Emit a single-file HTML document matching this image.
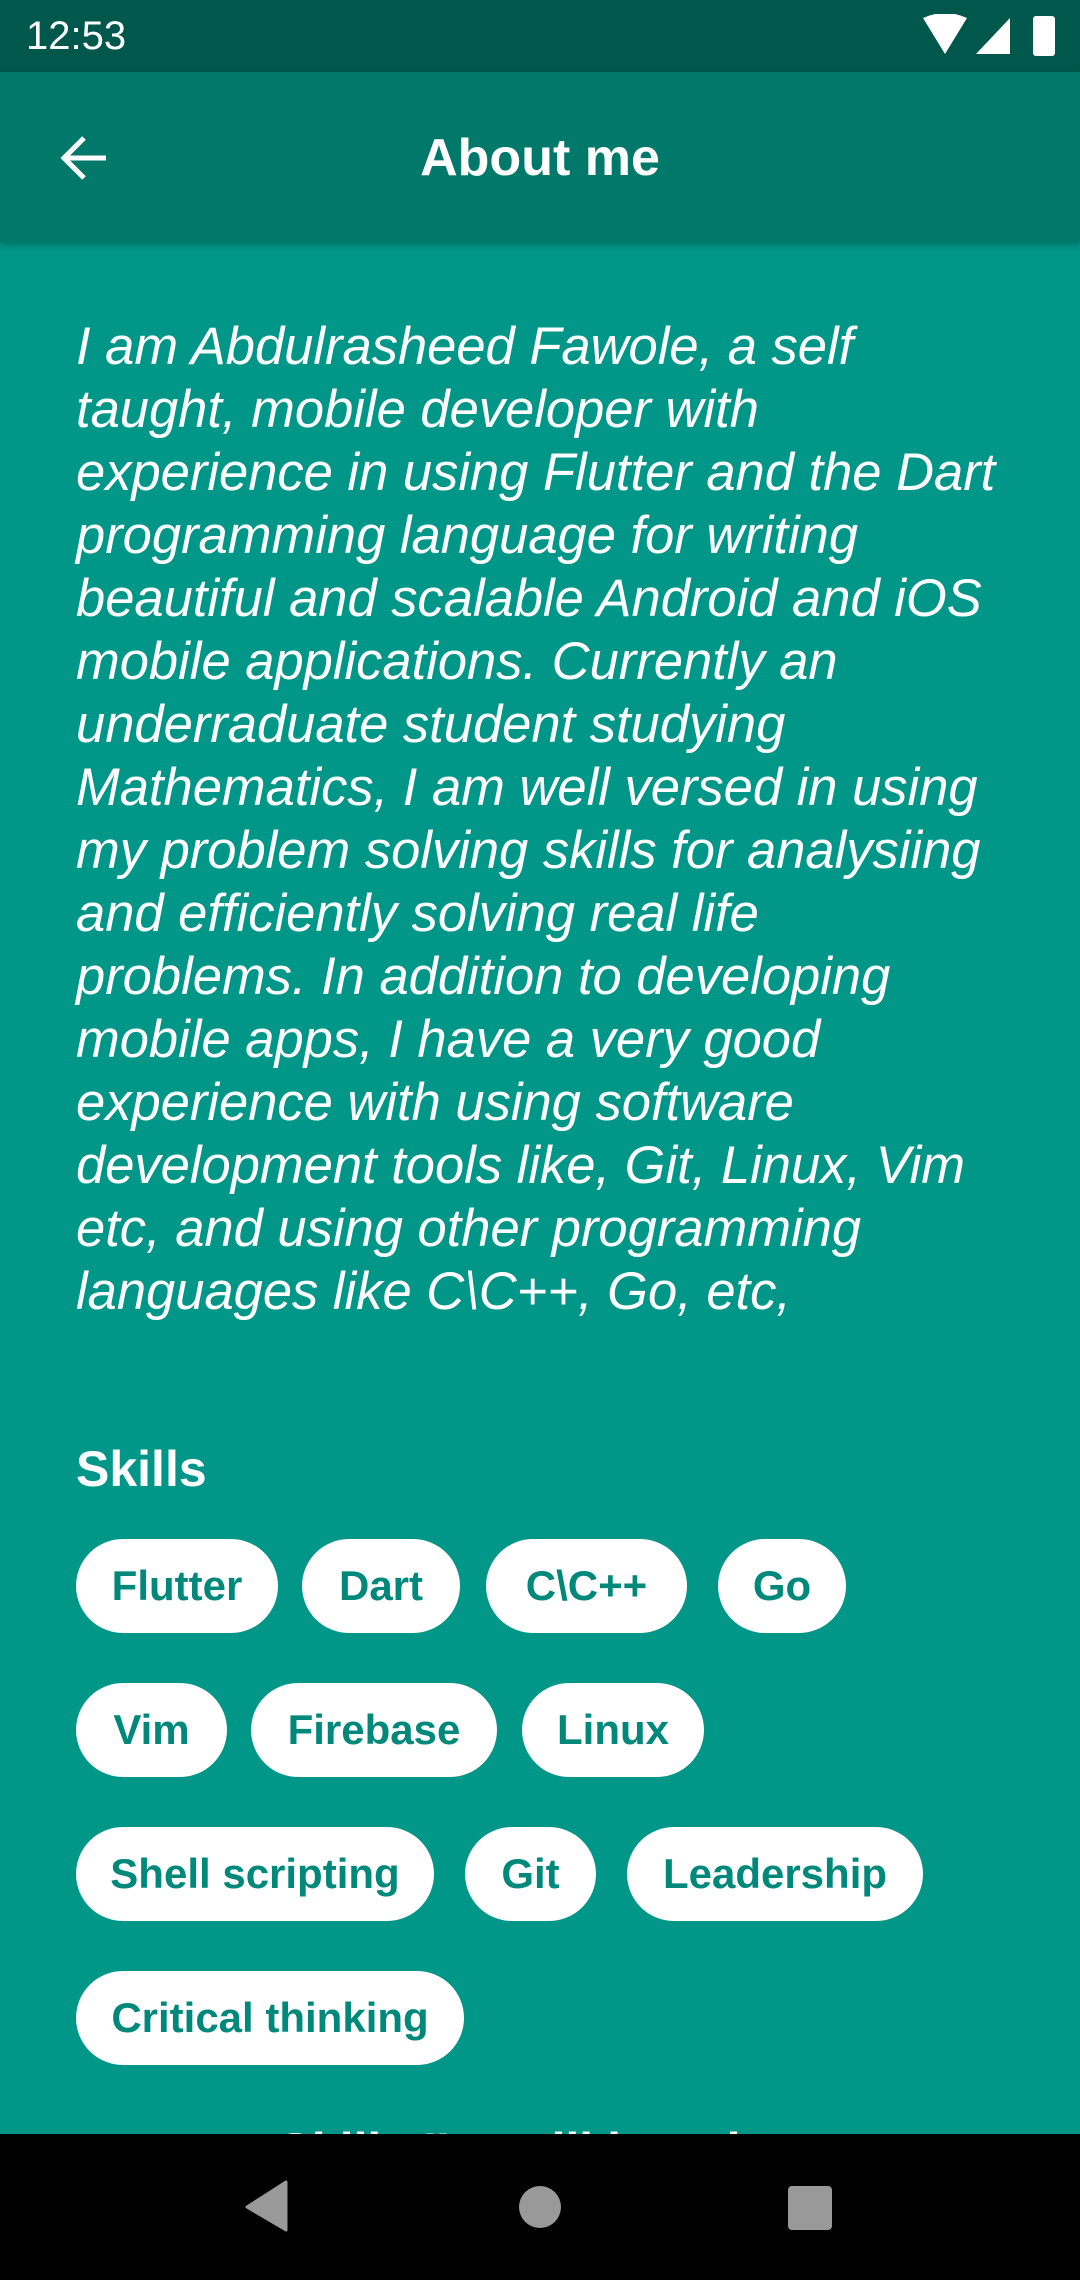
<!DOCTYPE html>
<html><head><meta charset="utf-8"><style>
*{margin:0;padding:0;box-sizing:border-box}
html,body{width:1080px;height:2280px;overflow:hidden}
body{background:#009688;font-family:"Liberation Sans",sans-serif;position:relative}
.sb{position:absolute;left:0;top:0;width:1080px;height:72px;background:#00574B;color:#fff}
.ab{position:absolute;left:0;top:72px;width:1080px;height:170px;background:#00796B;box-shadow:0 3px 6px rgba(0,0,0,.25)}
.p{position:absolute;left:76px;top:315px;color:#fff;font-style:italic;font-size:52.5px;line-height:63px;white-space:nowrap}
.h{position:absolute;left:76px;top:1440px;color:#fff;font-size:50px;font-weight:bold}
.c{position:absolute;height:94px;background:#fff;border-radius:47px;color:#00897B;font-weight:bold;font-size:42px;line-height:94px;text-align:center;white-space:nowrap}
.nav{position:absolute;left:0;bottom:0;width:1080px;height:146px;background:#000}
</style></head><body>
<div class="sb">
<div style="position:absolute;left:26px;top:14px;font-size:40px">12:53</div>
<svg style="position:absolute;left:920px;top:14px" width="150" height="44" viewBox="0 0 150 44">
<path d="M3 4 Q25 -6 47 4 L25 40 Z" fill="#fff"/>
<path d="M56 40 L90 4 L90 40 Z" fill="#fff"/>
<rect x="113" y="2" width="22" height="40" rx="3" fill="#fff"/>
</svg>
</div>
<div class="ab">
<svg style="position:absolute;left:58px;top:62px" width="52" height="48" viewBox="0 0 52 48"><path d="M48 24 H6 M26 4 L6 24 L26 44" stroke="#fff" stroke-width="5" fill="none"/></svg>
<div style="position:absolute;left:0;width:1080px;text-align:center;top:56px;color:#fff;font-size:52px;font-weight:bold">About me</div>
</div>
<div class="p">I am Abdulrasheed Fawole, a self<br>taught, mobile developer with<br>experience in using Flutter and the Dart<br>programming language for writing<br>beautiful and scalable Android and iOS<br>mobile applications. Currently an<br>underraduate student studying<br>Mathematics, I am well versed in using<br>my problem solving skills for analysiing<br>and efficiently solving real life<br>problems. In addition to developing<br>mobile apps, I have a very good<br>experience with using software<br>development tools like, Git, Linux, Vim<br>etc, and using other programming<br>languages like C\C++, Go, etc,</div>
<div class="h">Skills</div>
<div class="c" style="left:76px;top:1539px;width:202px">Flutter</div>
<div class="c" style="left:302px;top:1539px;width:158px">Dart</div>
<div class="c" style="left:486px;top:1539px;width:201px">C\C++</div>
<div class="c" style="left:718px;top:1539px;width:128px">Go</div>
<div class="c" style="left:76px;top:1683px;width:151px">Vim</div>
<div class="c" style="left:251px;top:1683px;width:246px">Firebase</div>
<div class="c" style="left:522px;top:1683px;width:182px">Linux</div>
<div class="c" style="left:76px;top:1827px;width:358px">Shell scripting</div>
<div class="c" style="left:465px;top:1827px;width:131px">Git</div>
<div class="c" style="left:627px;top:1827px;width:296px">Leadership</div>
<div class="c" style="left:76px;top:1971px;width:388px">Critical thinking</div>
<div style="position:absolute;left:0;width:1080px;top:2122px;text-align:center;color:#fff;font-size:50px;font-weight:bold">Skills I'm still learning</div>
<div class="nav">
<svg width="1080" height="146" viewBox="0 0 1080 146">
<path d="M286 48 L286 96 L247 73 Z" fill="#999" stroke="#999" stroke-width="3" stroke-linejoin="round"/>
<circle cx="540" cy="73" r="21" fill="#999"/>
<rect x="788" y="52" width="44" height="44" rx="4" fill="#999"/>
</svg>
</div>
</body></html>
